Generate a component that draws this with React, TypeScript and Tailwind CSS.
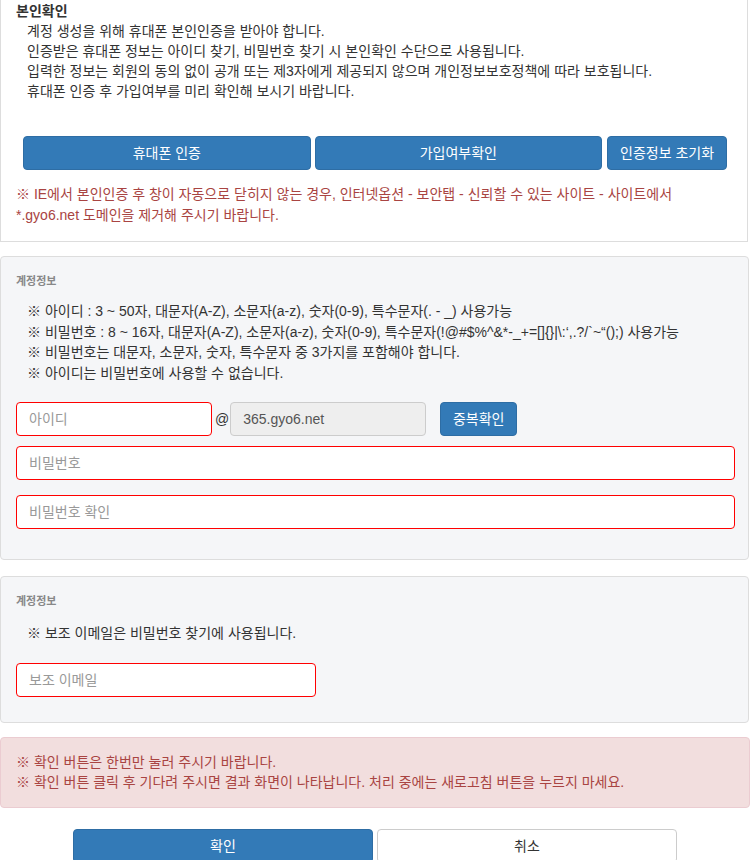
import React from 'react'

const font = { fontFamily: '"Liberation Sans", "Noto Sans CJK KR", sans-serif' }

const inputBase =
  'h-[34px] rounded-[4px] border px-3 text-[14px] text-[#555] placeholder:text-[#999] outline-none'

const Panel: React.FC<{ title: string; className?: string; children: React.ReactNode }> = ({
  title,
  className = '',
  children,
}) => (
  <section className={`rounded-[4px] border border-[#ddd] bg-[#f5f6f8] px-[15px] ${className}`}>
    <h3 className="pt-[16px] text-[11px] font-bold leading-[16px] text-[#888]">{title}</h3>
    {children}
  </section>
)

export default function App() {
  return (
    <div className="w-[751px] bg-white text-[14px] leading-[20px] text-[#333]" style={font}>
      <section className="mr-[3px] border-x border-b border-[#ddd] pt-[1px] pb-[15px] pl-[15px] pr-[20px]">
        <h2 className="font-bold">본인확인</h2>
        <div className="pl-[11px]">
          <p>계정 생성을 위해 휴대폰 본인인증을 받아야 합니다.</p>
          <p>인증받은 휴대폰 정보는 아이디 찾기, 비밀번호 찾기 시 본인확인 수단으로 사용됩니다.</p>
          <p>입력한 정보는 회원의 동의 없이 공개 또는 제3자에게 제공되지 않으며 개인정보보호정책에 따라 보호됩니다.</p>
          <p>휴대폰 인증 후 가입여부를 미리 확인해 보시기 바랍니다.</p>
        </div>
        <div className="mt-[35px] flex gap-[4px] pl-[7px]">
          <button className="h-[34px] w-[288px] rounded-[4px] border border-[#2e6da4] bg-[#337ab7] text-white">
            휴대폰 인증
          </button>
          <button className="h-[34px] w-[288px] rounded-[4px] border border-[#2e6da4] bg-[#337ab7] text-white">
            가입여부확인
          </button>
          <button className="ml-[1px] h-[34px] w-[120px] rounded-[4px] border border-[#2e6da4] bg-[#337ab7] text-white">
            인증정보 초기화
          </button>
        </div>
        <p className="mt-[14px] leading-[21px] text-[#a94442]">
          ※ IE에서 본인인증 후 창이 자동으로 닫히지 않는 경우, 인터넷옵션 - 보안탭 - 신뢰할 수 있는 사이트 - 사이트에서 *.gyo6.net 도메인을 제거해 주시기 바랍니다.
        </p>
      </section>

      <Panel title="계정정보" className="mt-[14px] mr-[2px] pb-[30px]">
        <ul className="mt-[12px] pl-[11px] leading-[20.5px]">
          <li>※ 아이디 : 3 ~ 50자, 대문자(A-Z), 소문자(a-z), 숫자(0-9), 특수문자(. - _) 사용가능</li>
          <li>※ 비밀번호 : 8 ~ 16자, 대문자(A-Z), 소문자(a-z), 숫자(0-9), 특수문자(!@#$%^&amp;*-_+=[]{'{}'}|\:‘,.?/`~“();) 사용가능</li>
          <li>※ 비밀번호는 대문자, 소문자, 숫자, 특수문자 중 3가지를 포함해야 합니다.</li>
          <li>※ 아이디는 비밀번호에 사용할 수 없습니다.</li>
        </ul>
        <div className="mt-[19px] flex items-center">
          <input className={`${inputBase} w-[196px] border-[#f00] bg-white`} placeholder="아이디" />
          <span className="ml-[3px] mr-[1px] text-[#333]">@</span>
          <input
            className={`${inputBase} w-[196px] border-[#ccc] bg-[#eee]`}
            defaultValue="365.gyo6.net"
            readOnly
          />
          <button className="ml-[14px] h-[34px] w-[77px] rounded-[4px] border border-[#2e6da4] bg-[#337ab7] text-white">
            중복확인
          </button>
        </div>
        <input className={`${inputBase} mt-[10px] block w-[719px] border-[#f00] bg-white`} placeholder="비밀번호" />
        <input
          className={`${inputBase} mt-[15px] block w-[719px] border-[#f00] bg-white`}
          placeholder="비밀번호 확인"
        />
      </Panel>

      <Panel title="계정정보" className="mt-[16px] mr-[2px] pb-[25px]">
        <p className="mt-[14px] pl-[11px]">※ 보조 이메일은 비밀번호 찾기에 사용됩니다.</p>
        <input className={`${inputBase} mt-[20px] block w-[300px] border-[#f00] bg-white`} placeholder="보조 이메일" />
      </Panel>

      <div className="mt-[14px] mr-[1px] rounded-[4px] border border-[#ebccd1] bg-[#f2dede] px-[15px] pt-[14px] pb-[15px] text-[#a94442]">
        <p>※ 확인 버튼은 한번만 눌러 주시기 바랍니다.</p>
        <p>※ 확인 버튼 클릭 후 기다려 주시면 결과 화면이 나타납니다. 처리 중에는 새로고침 버튼을 누르지 마세요.</p>
      </div>

      <div className="mt-[21px] flex justify-center gap-[4px] pb-[10px] pr-[1px]">
        <button className="h-[34px] w-[300px] rounded-[4px] border border-[#2e6da4] bg-[#337ab7] text-white">
          확인
        </button>
        <button className="h-[34px] w-[300px] rounded-[4px] border border-[#ccc] bg-white text-[#333]">
          취소
        </button>
      </div>
    </div>
  )
}
